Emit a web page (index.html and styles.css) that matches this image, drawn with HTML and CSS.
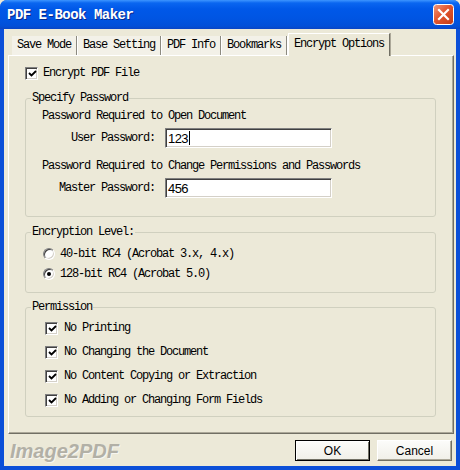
FILE: index.html
```html
<!DOCTYPE html>
<html>
<head>
<meta charset="utf-8">
<link rel="stylesheet" href="styles.css">
</head>
<body>
<div class="window">
  <div class="titlebar">
    <span class="title">PDF E-Book Maker</span>
    <span class="close">
      <svg width="21" height="21" viewBox="0 0 21 21">
        <defs>
          <linearGradient id="cg" x1="0" y1="0" x2="1" y2="1">
            <stop offset="0" stop-color="#F19A7E"/>
            <stop offset="0.45" stop-color="#E2562F"/>
            <stop offset="1" stop-color="#C23A14"/>
          </linearGradient>
        </defs>
        <rect x="0.5" y="0.5" width="20" height="20" rx="3" fill="url(#cg)" stroke="#FFFFFF"/>
        <path d="M6 6 L15 15 M15 6 L6 15" stroke="#FFFFFF" stroke-width="2.2" stroke-linecap="square"/>
      </svg>
    </span>
  </div>
  <div class="frame">
    <div class="client">
      <div class="tabs">
        <div class="tab">Save Mode</div>
        <div class="tab">Base Setting</div>
        <div class="tab">PDF Info</div>
        <div class="tab">Bookmarks</div>
        <div class="tab active">Encrypt Options</div>
      </div>
      <div class="panel">
        <div class="row top-check">
          <span class="cb"><svg width="9" height="9" viewBox="0 0 9 9"><path d="M1 4 L3.5 6.5 L8 2" fill="none" stroke="#000" stroke-width="1.8"/></svg></span>
          <span class="txt">Encrypt PDF File</span>
        </div>

        <fieldset class="group g-pw">
          <legend>Specify Password</legend>
          <div class="gbody">
            <div class="hint">Password Required to Open Document</div>
            <div class="field">
              <span class="lbl">User Password:</span>
              <span class="input">123<span class="caret"></span></span>
            </div>
            <div class="hint hint2">Password Required to Change Permissions and Passwords</div>
            <div class="field">
              <span class="lbl">Master Password:</span>
              <span class="input">456</span>
            </div>
          </div>
        </fieldset>

        <fieldset class="group g-enc">
          <legend>Encryption Level:</legend>
          <div class="gbody">
            <div class="row radio-row">
              <span class="radio"></span>
              <span class="txt">40-bit RC4 (Acrobat 3.x, 4.x)</span>
            </div>
            <div class="row radio-row">
              <span class="radio on"><span class="dot"></span></span>
              <span class="txt">128-bit RC4 (Acrobat 5.0)</span>
            </div>
          </div>
        </fieldset>

        <fieldset class="group g-perm">
          <legend>Permission</legend>
          <div class="gbody">
            <div class="row perm-row">
              <span class="cb"><svg width="9" height="9" viewBox="0 0 9 9"><path d="M1 4 L3.5 6.5 L8 2" fill="none" stroke="#000" stroke-width="1.8"/></svg></span>
              <span class="txt">No Printing</span>
            </div>
            <div class="row perm-row">
              <span class="cb"><svg width="9" height="9" viewBox="0 0 9 9"><path d="M1 4 L3.5 6.5 L8 2" fill="none" stroke="#000" stroke-width="1.8"/></svg></span>
              <span class="txt">No Changing the Document</span>
            </div>
            <div class="row perm-row">
              <span class="cb"><svg width="9" height="9" viewBox="0 0 9 9"><path d="M1 4 L3.5 6.5 L8 2" fill="none" stroke="#000" stroke-width="1.8"/></svg></span>
              <span class="txt">No Content Copying or Extraction</span>
            </div>
            <div class="row perm-row">
              <span class="cb"><svg width="9" height="9" viewBox="0 0 9 9"><path d="M1 4 L3.5 6.5 L8 2" fill="none" stroke="#000" stroke-width="1.8"/></svg></span>
              <span class="txt">No Adding or Changing Form Fields</span>
            </div>
          </div>
        </fieldset>
      </div>
      <div class="footer">
        <span class="brand">Image2PDF</span>
        <div class="buttons">
          <button class="btn default">OK</button>
          <button class="btn">Cancel</button>
        </div>
      </div>
    </div>
  </div>
</div>
</body>
</html>
```

FILE: styles.css
```css
* { box-sizing: border-box; }

html, body {
  margin: 0;
  padding: 0;
  background: #ECE9D8;
}

.window {
  width: 460px;
  height: 470px;
  display: flex;
  flex-direction: column;
  border-radius: 7px 7px 0 0;
  overflow: hidden;
  background: #0A52DC;
}

.titlebar {
  height: 29px;
  flex: none;
  display: flex;
  align-items: center;
  justify-content: space-between;
  padding: 1px 6px 0 7px;
  background: linear-gradient(to bottom, #3D95FF 0px, #0A66F0 3px, #0058E8 9px, #0055E3 18px, #0250D8 26px, #0A45C4 29px);
}

.title {
  font-family: "Liberation Mono", monospace;
  font-weight: bold;
  font-size: 14px;
  letter-spacing: -0.5px;
  color: #FFFFFF;
  text-shadow: 1px 1px 0 #0A2A8C;
  white-space: pre;
}

.close {
  display: flex;
  width: 21px;
  height: 21px;
  margin-top: -1px;
}

.frame {
  flex: 1;
  display: flex;
  border-left: 4px solid #0B4FD8;
  border-right: 4px solid #0B4FD8;
  border-bottom: 4px solid #0B4FD8;
  box-shadow: inset 1px 0 0 #0030A8, inset -1px 0 0 #0030A8, inset 0 -1px 0 #0030A8;
}

.client {
  flex: 1;
  display: flex;
  flex-direction: column;
  background: #ECE9D8;
  padding-top: 4px;
  font-family: "Liberation Mono", monospace;
  font-size: 12px;
  letter-spacing: -1.2px;
  color: #000;
}

.tabs {
  height: 22px;
  display: flex;
  align-items: flex-end;
  padding-left: 8px;
  position: relative;
  z-index: 1;
}

.tab {
  height: 19px;
  line-height: 19px;
  padding: 0 5px;
  border-right: 1px solid #8C8A80;
  margin-right: 1px;
  box-shadow: 1px 0 0 #FFFFFF;
  background: #F3F1E8;
  white-space: pre;
}

.tab.active {
  height: 23px;
  line-height: 20px;
  margin-bottom: -1px;
  padding: 0 5px 3px 5px;
  background: #ECE9D8;
  border-top: 1px solid #FFFFFF;
  border-left: 1px solid #FFFFFF;
  border-right: 1px solid #716F64;
  box-shadow: 1px 0 0 #ACA899;
}

.panel {
  height: 379px;
  margin: 0 2px 0 4px;
  border-top: 1px solid #FFFFFF;
  border-left: 1px solid #FFFFFF;
  border-right: 1px solid #716F64;
  border-bottom: 1px solid #716F64;
  box-shadow: inset -1px -1px 0 #ACA899;
  padding: 9px 17px 0 16px;
  display: flex;
  flex-direction: column;
}

.row {
  display: flex;
  align-items: center;
}

.top-check {
  height: 16px;
}

.top-check .cb {
  margin-right: 5px;
}

.cb {
  width: 13px;
  height: 13px;
  flex: none;
  display: flex;
  align-items: center;
  justify-content: center;
  background: #FFFFFF;
  border: 1px solid;
  border-color: #808080 #FFFFFF #FFFFFF #808080;
  box-shadow: inset 1px 1px 0 #404040, inset -1px -1px 0 #D4D0C8;
  padding: 1px 0 0 1px;
}

.txt {
  white-space: pre;
}

.group {
  margin: 10px 0 0 0;
  padding: 0;
  border: 1px solid #D0D0BF;
  border-radius: 3px;
  min-inline-size: 0;
}

.group legend {
  line-height: 14px;
  padding: 0 1px;
  margin-left: 5px;
}

.g-pw .gbody {
  padding: 4px 16px 18px 16px;
}

.hint {
  line-height: 14px;
  white-space: pre;
}

.hint2 {
  margin-top: 11px;
}

.field {
  display: flex;
  align-items: center;
  margin-top: 5px;
}

.lbl {
  width: 113px;
  text-align: right;
  margin-right: 10px;
  white-space: pre;
}

.input {
  width: 167px;
  height: 20px;
  display: flex;
  align-items: center;
  padding-left: 2px;
  background: #FFFFFF;
  border: 1px solid;
  border-color: #808080 #FFFFFF #FFFFFF #808080;
  box-shadow: inset 1px 1px 0 #404040, inset -1px -1px 0 #D4D0C8;
  font-family: "Liberation Sans", Arial, sans-serif;
  font-size: 13px;
  letter-spacing: -0.6px;
}

.caret {
  width: 1px;
  height: 14px;
  margin-left: 1px;
  background: #000;
}

.g-enc {
  margin-top: 8px;
}

.g-enc .gbody {
  padding: 5px 16px 8px 17px;
}

.radio-row {
  height: 20px;
}

.radio {
  width: 12px;
  height: 12px;
  flex: none;
  margin-right: 5px;
  border-radius: 50%;
  border: 1px solid;
  border-color: #808080 #FFFFFF #FFFFFF #808080;
  box-shadow: inset 1px 1px 0 #404040, inset -1px -1px 0 #D4D0C8;
  background: #FFFFFF;
  display: flex;
  align-items: center;
  justify-content: center;
}

.radio .dot {
  width: 4px;
  height: 4px;
  border-radius: 50%;
  background: #000;
}

.g-perm {
  margin-top: 7px;
}

.g-perm .gbody {
  padding: 2px 16px 4px 19px;
}

.perm-row {
  height: 24px;
}

.perm-row .cb {
  margin-right: 6px;
}

.footer {
  flex: 1;
  display: flex;
  align-items: flex-start;
  justify-content: space-between;
  padding: 6px 4px 0 6px;
}

.brand {
  font-family: "Liberation Sans", Arial, sans-serif;
  font-weight: bold;
  font-style: italic;
  font-size: 20px;
  line-height: 22px;
  letter-spacing: 0;
  color: #B2B0A6;
  text-shadow: 1px 1px 0 #F7F6F0;
}

.buttons {
  display: flex;
  gap: 7px;
}

.btn {
  width: 75px;
  height: 21px;
  padding: 0;
  margin: 0;
  font-family: "Liberation Sans", Arial, sans-serif;
  font-size: 12px;
  letter-spacing: 0;
  color: #000;
  background: linear-gradient(to bottom, #FCFCFA, #F0EFE8);
  border: 1px solid;
  border-color: #FFFFFF #716F64 #716F64 #FFFFFF;
  box-shadow: inset -1px -1px 0 #ACA899;
}

.btn.default {
  border: 1px solid #000;
  box-shadow: inset 1px 1px 0 #FFFFFF, inset -1px -1px 0 #716F64;
}
```
